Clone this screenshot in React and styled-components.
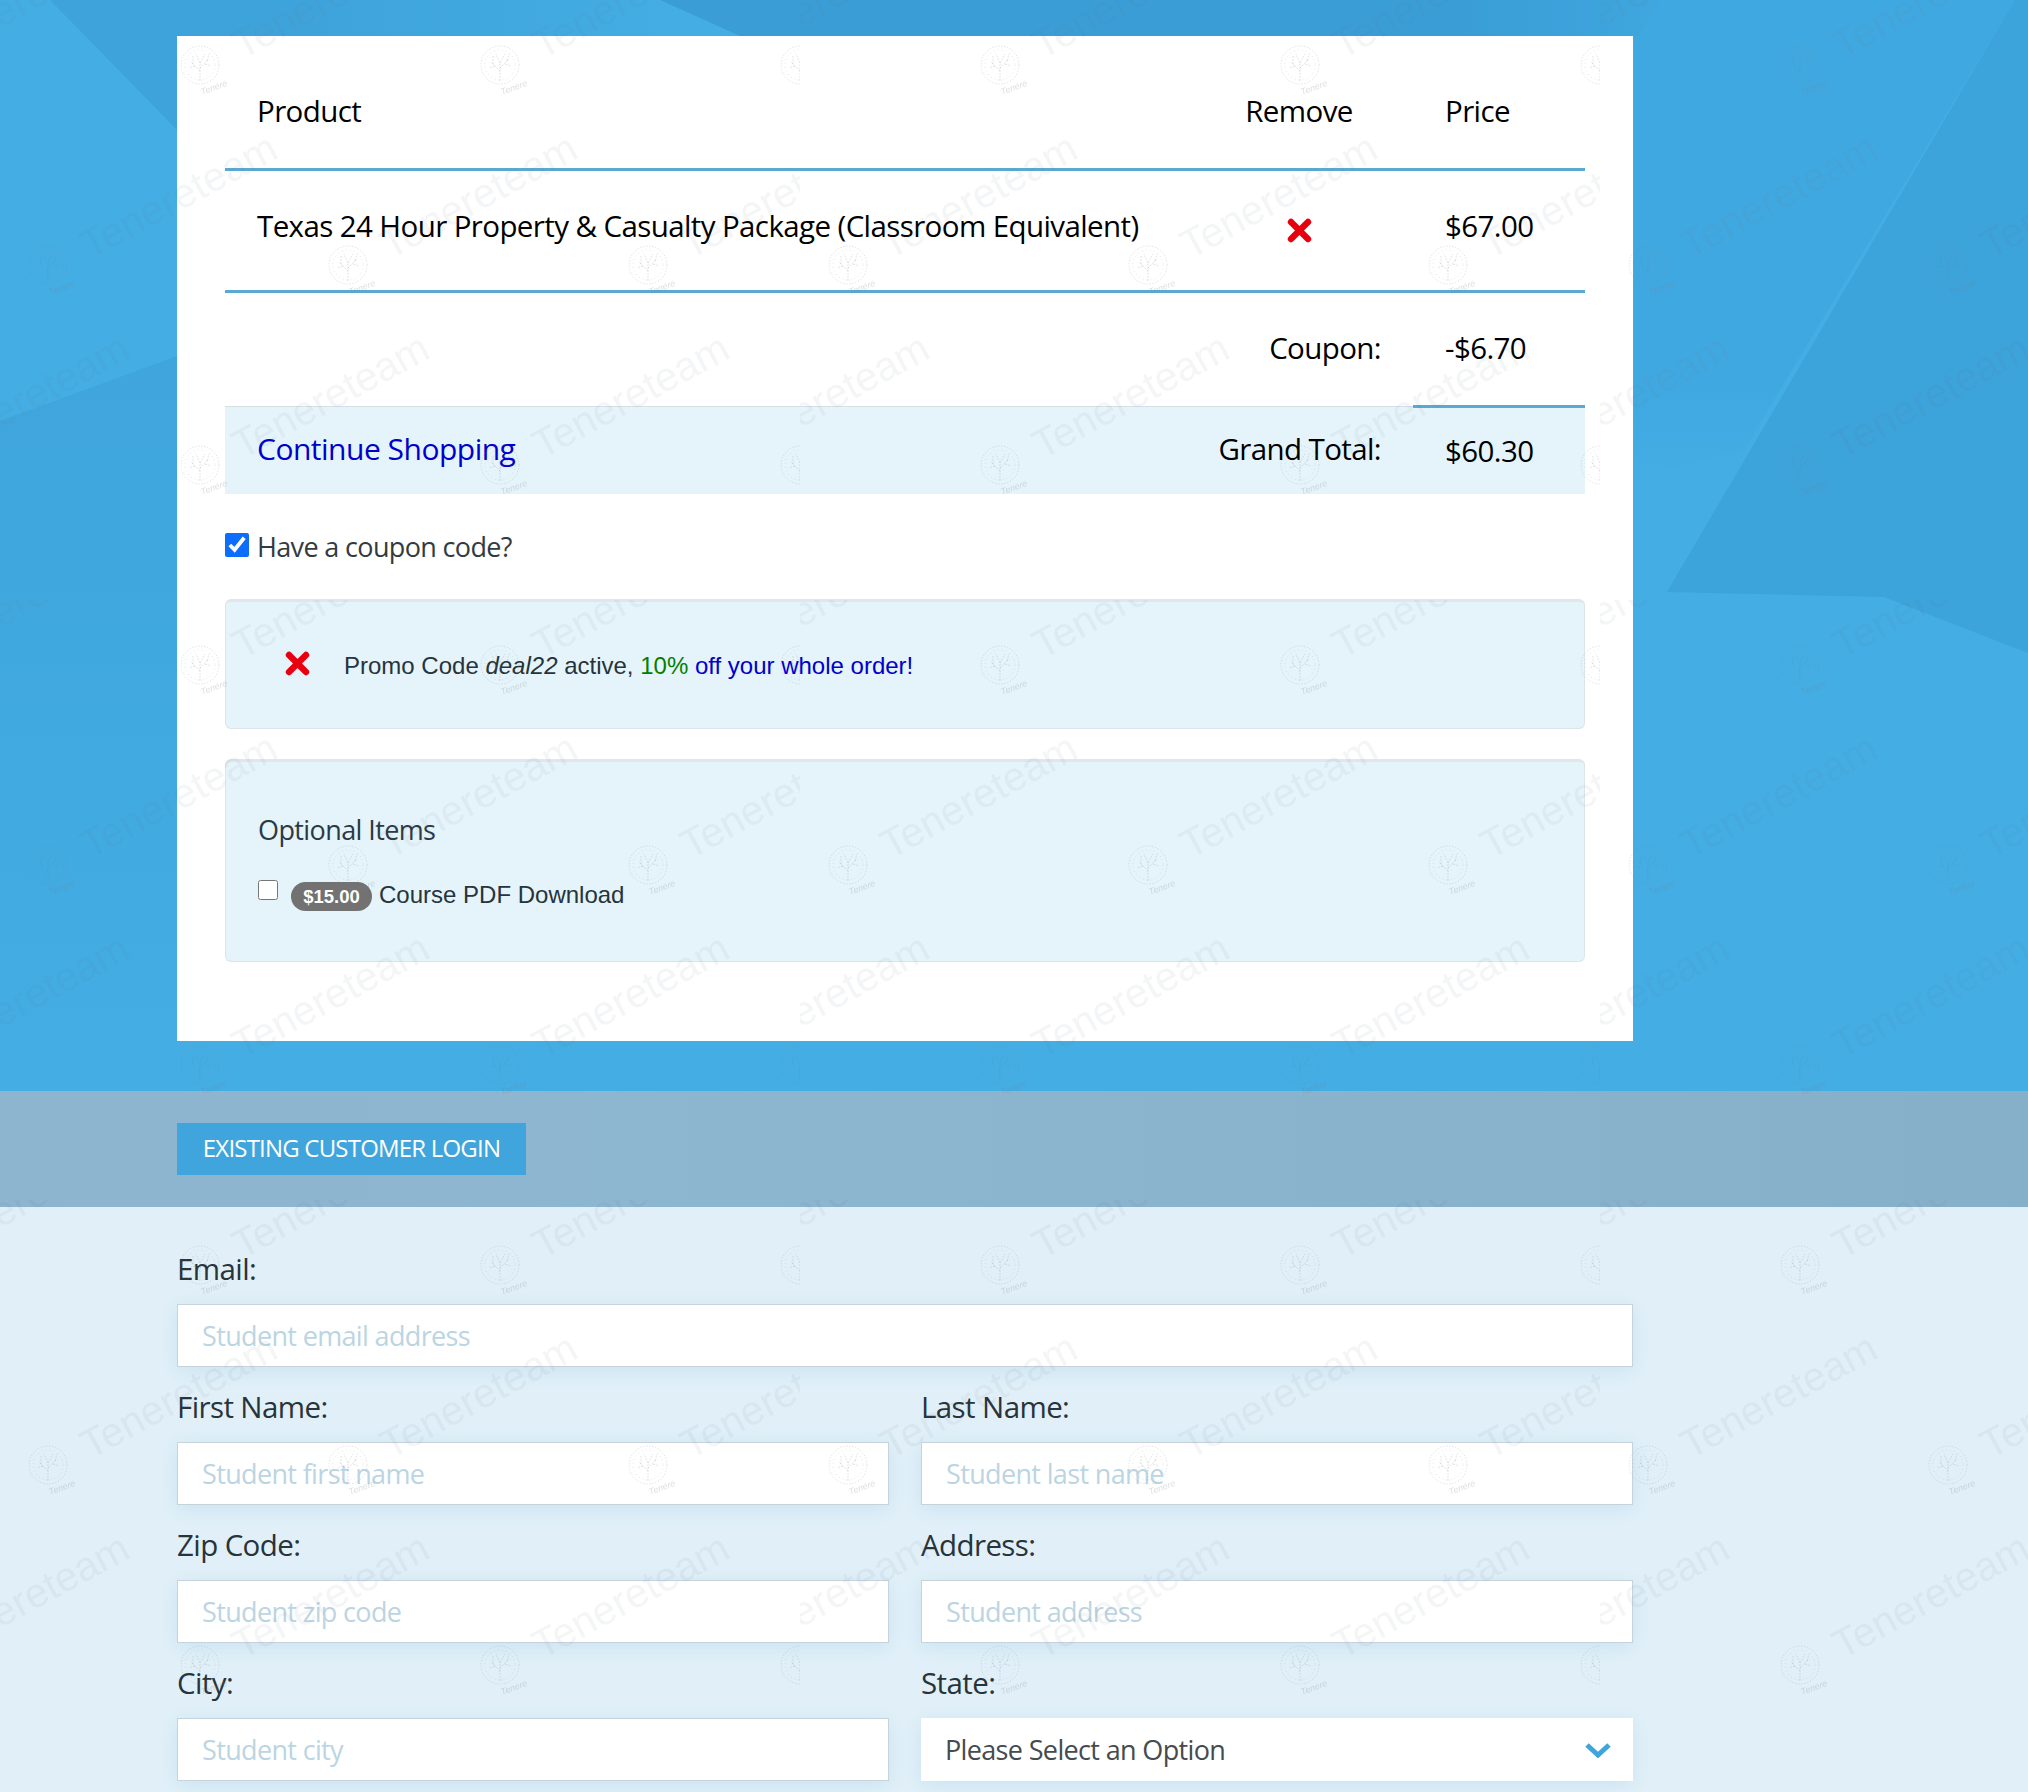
import styled, { createGlobalStyle } from "styled-components";

const bodyFont = `"Open Sans", "Noto Sans", "Liberation Sans", sans-serif`;
const arial = `"Liberation Sans", Arial, sans-serif`;

const GlobalStyle = createGlobalStyle`
  html, body {
    margin: 0;
    padding: 0;
    background: #e1f0f8;
    font-family: ${bodyFont};
  }
  * {
    box-sizing: border-box;
  }
`;

const Page = styled.div`
  position: relative;
  width: 2028px;
  height: 1792px;
  overflow: hidden;
`;

const Hero = styled.section`
  position: relative;
  height: 1091px;
  padding: 36px 0 0 177px;
  background: #43ade4;
`;

const HeroFacets = styled.svg`
  position: absolute;
  top: 0;
  left: 0;
`;

const Card = styled.div`
  position: relative;
  width: 1456px;
  height: 1005px;
  padding: 18px 48px 0;
  background: #fff;
`;

const CartRow = styled.div`
  display: grid;
  grid-template-columns: 1fr 228px 172px;
  align-items: center;
  height: ${(p) => p.$height}px;
  background: ${(p) => (p.$shaded ? "#e5f4fb" : "transparent")};
  border-top: ${(p) => (p.$shaded ? "1px solid #d8e0e4" : "none")};
  border-bottom: ${(p) => (p.$line ? "3px solid #5aa9d2" : "none")};
  font-size: 29.5px;
  letter-spacing: -0.6px;
  color: #000;
`;

const Cell = styled.div`
  padding: 0 32px ${(p) => p.$lift || 0}px;
  grid-column: ${(p) => p.$span || "auto"};
  align-self: stretch;
  display: flex;
  align-items: center;
  justify-content: ${(p) => (p.$align === "right" ? "flex-end" : p.$align === "center" ? "center" : "flex-start")};
`;

const TotalCell = styled(Cell)`
  border-top: 3px solid #5aa9d2;
  margin-top: -2px;
`;

const ShopLink = styled.a`
  color: #0000cd;
  text-decoration: none;
  font-size: 30px;
  letter-spacing: -0.5px;
`;

const RemoveIcon = styled.svg`
  display: block;
  width: 25px;
  height: 25px;
`;

const CouponLine = styled.label`
  display: flex;
  align-items: center;
  gap: 8px;
  margin-top: 38px;
  height: 28px;
  font-size: 27px;
  letter-spacing: -0.65px;
  color: #333b40;
`;

const Check = styled.input`
  width: ${(p) => p.$size}px;
  height: ${(p) => p.$size}px;
  margin: 0;
  flex: none;
  accent-color: #0d6efd;
`;

const CouponCheck = styled(Check)`
  margin-top: -3px;
`;

const Well = styled.div`
  height: ${(p) => p.$height}px;
  margin-top: ${(p) => p.$top}px;
  background: #e5f3fb;
  border: 1px solid #dce6ea;
  border-top: 3px solid #dfe7ea;
  border-radius: 6px;
`;

const PromoWell = styled(Well)`
  display: flex;
  align-items: center;
  gap: 34px;
  padding: 0 0 0 59px;
`;

const PromoMark = styled.div`
  margin-top: -3px;
`;

const PromoText = styled.div`
  padding-top: 2px;
  font-family: ${arial};
  font-size: 24px;
  color: #26343c;
  em {
    font-style: italic;
  }
`;

const Green = styled.span`
  color: #008000;
`;

const Blue = styled.span`
  color: #0000cd;
`;

const OptionalWell = styled(Well)`
  padding: 50px 32px 0;
`;

const OptionalTitle = styled.div`
  font-size: 27px;
  line-height: 36px;
  letter-spacing: -0.6px;
  color: #2b3a42;
`;

const OptionRow = styled.div`
  display: flex;
  align-items: flex-start;
  margin-top: 30px;
`;

const OptionCheck = styled(Check)`
  margin-top: 2px;
  margin-right: 13px;
`;

const Badge = styled.span`
  display: inline-flex;
  align-items: center;
  justify-content: center;
  width: 81px;
  height: 29px;
  margin-top: 4px;
  margin-right: 7px;
  border-radius: 15px;
  background: #727272;
  color: #fff;
  font-family: ${arial};
  font-weight: 700;
  font-size: 18.5px;
`;

const OptionText = styled.span`
  font-family: ${arial};
  font-size: 24px;
  line-height: 34px;
  color: #26343c;
`;

const LoginStrip = styled.div`
  height: 116px;
  padding: 32px 0 0 177px;
  background: linear-gradient(90deg, #8db5cf 0%, #8db6d0 30%, #86afca 100%);
`;

const LoginButton = styled.button`
  display: block;
  width: 349px;
  height: 52px;
  padding: 0 0 3px;
  border: 0;
  background: #3fa5dc;
  color: #fff;
  font-family: ${bodyFont};
  font-size: 24px;
  letter-spacing: -0.8px;
  text-transform: uppercase;
`;

const FormSection = styled.section`
  padding: 47px 0 0 177px;
`;

const FormGrid = styled.div`
  display: grid;
  grid-template-columns: 712px 712px;
  column-gap: 32px;
  row-gap: 25px;
`;

const Field = styled.div`
  grid-column: ${(p) => (p.$wide ? "1 / -1" : "auto")};
`;

const FieldLabel = styled.label`
  display: block;
  height: 34px;
  margin-bottom: 16px;
  font-size: 29.5px;
  line-height: 30px;
  letter-spacing: -0.6px;
  color: #28333a;
`;

const controlStyle = `
  display: block;
  width: 100%;
  height: 63px;
  padding: 0 24px;
  background: #fff;
  font-family: ${bodyFont};
  font-size: 27px;
  letter-spacing: -0.65px;
  box-shadow: 0 4px 18px rgba(63, 150, 205, 0.14);
  outline: none;
`;

const TextInput = styled.input`
  ${controlStyle}
  border: 1px solid #c6d3db;
  &::placeholder {
    color: #bbd5e2;
    opacity: 1;
  }
`;

const SelectWrap = styled.div`
  position: relative;
`;

const Select = styled.select`
  ${controlStyle}
  border: 0;
  appearance: none;
  color: #454b4f;
`;

const Chevron = styled.svg`
  position: absolute;
  top: 24px;
  right: 21px;
  width: 28px;
  height: 16px;
  pointer-events: none;
`;

const Watermark = styled.svg`
  position: absolute;
  top: 0;
  left: 0;
  pointer-events: none;
`;

const logoRows = [
  { y: 65, xs: [-100, 200, 500, 800] },
  { y: 265, xs: [48, 348, 648] },
  { y: 465, xs: [-100, 200, 500, 800] },
];

const TreeLogo = ({ x, y }) => (
  <g transform={`translate(${x} ${y})`} fill="none" stroke="rgba(110,125,135,0.2)" strokeWidth="1">
    <circle r="19" strokeDasharray="1.5 1.5" />
    <circle r="15" strokeDasharray="1 3" />
    <path
      d="M0 16V-2M0 6L-9 -3M0 3L9 -6M-5 1L-11 3M5 -1L11 1M0 -2L-4 -11M0 -2L5 -11M-7 -1L-7 -9M7 -4L9 -11"
      strokeDasharray="2 1"
    />
    <text
      x="2"
      y="30"
      fontFamily={arial}
      fontSize="9"
      fontStyle="italic"
      fill="rgba(110,125,135,0.25)"
      stroke="none"
      transform="rotate(-20 2 30)"
    >
      Tenere
    </text>
  </g>
);

const PageWatermark = () => (
  <Watermark width="2028" height="1792" aria-hidden="true">
    <defs>
      <pattern id="tenere-tile" width="800" height="600" patternUnits="userSpaceOnUse">
        {logoRows.map((row) =>
          row.xs.map((x) => (
            <g key={`${x}-${row.y}`}>
              <TreeLogo x={x} y={row.y} />
              <text
                x={x + 42}
                y={row.y - 5}
                fontFamily={arial}
                fontSize="41"
                fill="rgba(105,120,130,0.07)"
                transform={`rotate(-28.5 ${x + 42} ${row.y - 5})`}
              >
                Tenereteam
              </text>
            </g>
          ))
        )}
      </pattern>
    </defs>
    <rect width="2028" height="1792" fill="url(#tenere-tile)" />
  </Watermark>
);

const RedX = () => (
  <RemoveIcon viewBox="0 0 25 25">
    <path d="M4 4L21 21M21 4L4 21" stroke="#e8000f" strokeWidth="6.4" strokeLinecap="round" />
  </RemoveIcon>
);

const TextField = ({ label, placeholder, wide }) => (
  <Field $wide={wide}>
    <FieldLabel>{label}</FieldLabel>
    <TextInput type="text" placeholder={placeholder} />
  </Field>
);

export default function App() {
  return (
    <Page>
      <GlobalStyle />
      <Hero>
        <HeroFacets width="2028" height="1091" aria-hidden="true">
          <defs>
            <linearGradient id="top-wedge" x1="0" x2="1" y1="0" y2="0">
              <stop offset="0" stopColor="#3ea3da" />
              <stop offset="0.4" stopColor="#3ea3da" />
              <stop offset="1" stopColor="#43ade4" />
            </linearGradient>
            <linearGradient id="lower-left" x1="0" x2="0" y1="0" y2="1">
              <stop offset="0" stopColor="#3fa5dc" />
              <stop offset="0.5" stopColor="#40a9e0" />
              <stop offset="1" stopColor="#43ade4" />
            </linearGradient>
            <linearGradient id="top-strip" x1="0" x2="1" y1="0" y2="0">
              <stop offset="0" stopColor="#3a9dd6" />
              <stop offset="0.8" stopColor="#3a9dd6" />
              <stop offset="1" stopColor="#3fa6de" />
            </linearGradient>
            <linearGradient id="right-side" x1="0" x2="0" y1="0" y2="1">
              <stop offset="0" stopColor="#40a8e0" />
              <stop offset="0.8" stopColor="#40a8e0" />
              <stop offset="1" stopColor="#43ade4" />
            </linearGradient>
          </defs>
          <polygon points="50,0 660,0 680,36 177,36 177,130" fill="url(#top-wedge)" />
          <polygon points="0,421 177,356 177,1091 0,1091" fill="url(#lower-left)" />
          <polygon points="1634,0 2015,0 1744,450 1634,478" fill="url(#right-side)" />
          <polygon points="660,0 1660,0 1640,36 740,36" fill="url(#top-strip)" />
          <polygon points="2015,0 2028,0 2028,653 1884,597 1667,592" fill="#3ca3db" />
        </HeroFacets>
        <Card>
          <CartRow $height={117} $line>
            <Cell $lift={2}>Product</Cell>
            <Cell $align="center" $lift={2}>
              Remove
            </Cell>
            <Cell $lift={2}>Price</Cell>
          </CartRow>
          <CartRow $height={122} $line>
            <Cell $lift={10}>Texas 24 Hour Property &amp; Casualty Package (Classroom Equivalent)</Cell>
            <Cell $align="center">
              <RedX />
            </Cell>
            <Cell $lift={10}>$67.00</Cell>
          </CartRow>
          <CartRow $height={113}>
            <Cell $span="1 / 3" $align="right" $lift={5}>
              Coupon:
            </Cell>
            <Cell $lift={5}>-$6.70</Cell>
          </CartRow>
          <CartRow $height={88} $shaded>
            <Cell $lift={4}>
              <ShopLink href="#shop">Continue Shopping</ShopLink>
            </Cell>
            <Cell $align="right" $lift={4}>
              Grand Total:
            </Cell>
            <TotalCell $lift={2}>$60.30</TotalCell>
          </CartRow>

          <CouponLine>
            <CouponCheck type="checkbox" $size={24} defaultChecked />
            Have a coupon code?
          </CouponLine>

          <PromoWell $height={130} $top={39}>
            <PromoMark>
              <RedX />
            </PromoMark>
            <PromoText>
              Promo Code <em>deal22</em> active, <Green>10%</Green> <Blue>off your whole order!</Blue>
            </PromoText>
          </PromoWell>

          <OptionalWell $height={203} $top={30}>
            <OptionalTitle>Optional Items</OptionalTitle>
            <OptionRow>
              <OptionCheck type="checkbox" $size={20} />
              <Badge>$15.00</Badge>
              <OptionText>Course PDF Download</OptionText>
            </OptionRow>
          </OptionalWell>
        </Card>
      </Hero>

      <LoginStrip>
        <LoginButton type="button">Existing Customer Login</LoginButton>
      </LoginStrip>

      <FormSection>
        <FormGrid>
          <TextField wide label="Email:" placeholder="Student email address" />
          <TextField label="First Name:" placeholder="Student first name" />
          <TextField label="Last Name:" placeholder="Student last name" />
          <TextField label="Zip Code:" placeholder="Student zip code" />
          <TextField label="Address:" placeholder="Student address" />
          <TextField label="City:" placeholder="Student city" />
          <Field>
            <FieldLabel>State:</FieldLabel>
            <SelectWrap>
              <Select defaultValue="">
                <option value="">Please Select an Option</option>
                <option value="TX">Texas</option>
              </Select>
              <Chevron viewBox="0 0 28 16">
                <path d="M3 3L14 13L25 3" fill="none" stroke="#3fa5dc" strokeWidth="5" />
              </Chevron>
            </SelectWrap>
          </Field>
        </FormGrid>
      </FormSection>

      <PageWatermark />
    </Page>
  );
}
